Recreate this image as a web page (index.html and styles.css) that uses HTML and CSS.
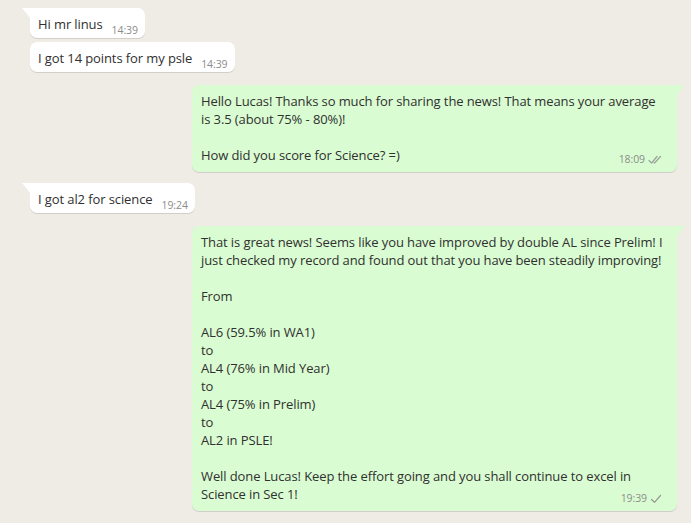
FILE: index.html
```html
<!DOCTYPE html>
<html lang="en">
<head>
<meta charset="utf-8">
<title>Chat</title>
<link rel="stylesheet" href="styles.css">
</head>
<body>
<div class="chat">
  <div class="row in first">
    <div class="bubble in tail">
      <span class="text">Hi mr linus</span>
      <span class="time">14:39</span>
    </div>
  </div>
  <div class="row in grouped">
    <div class="bubble in">
      <span class="text">I got 14 points for my psle</span>
      <span class="time">14:39</span>
    </div>
  </div>

  <div class="row out">
    <div class="bubble out tail">
      <p class="line">Hello Lucas! Thanks so much for sharing the news! That means your average is 3.5 (about 75% - 80%)!</p>
      <p class="line blank">&nbsp;</p>
      <p class="line last">How did you score for Science? =)<span class="time">18:09<svg class="tick" width="14" height="10" viewBox="0 0 14 10"><path d="M1 5.5 L3.6 8 L9 1.5 M6 7.6 L6.5 8 L12.5 1.5" fill="none" stroke="#9aa39a" stroke-width="1.2" stroke-linecap="round" stroke-linejoin="round"/></svg></span></p>
    </div>
  </div>

  <div class="row in">
    <div class="bubble in tail">
      <span class="text">I got al2 for science</span>
      <span class="time">19:24</span>
    </div>
  </div>

  <div class="row out">
    <div class="bubble out tail">
      <p class="line">That is great news! Seems like you have improved by double AL since Prelim! I just checked my record and found out that you have been steadily improving!</p>
      <p class="line blank">&nbsp;</p>
      <p class="line">From</p>
      <p class="line blank">&nbsp;</p>
      <p class="line">AL6 (59.5% in WA1)</p>
      <p class="line">to</p>
      <p class="line">AL4 (76% in Mid Year)</p>
      <p class="line">to</p>
      <p class="line">AL4 (75% in Prelim)</p>
      <p class="line">to</p>
      <p class="line">AL2 in PSLE!</p>
      <p class="line blank">&nbsp;</p>
      <p class="line last">Well done Lucas! Keep the effort going and you shall continue to excel in Science in Sec 1!<span class="time">19:39<svg class="tick" width="12" height="10" viewBox="0 0 12 10"><path d="M1.5 5.5 L4.5 8.3 L10.5 1.5" fill="none" stroke="#8f9a8f" stroke-width="1.2" stroke-linecap="round" stroke-linejoin="round"/></svg></span></p>
    </div>
  </div>
</div>
</body>
</html>
```

FILE: styles.css
```css
html, body {
  margin: 0;
  padding: 0;
  background: #ffffff;
}

body {
  font-family: "Open Sans", "Noto Sans", sans-serif;
  color: #303030;
}

.chat {
  width: 691px;
  height: 523px;
  box-sizing: border-box;
  background: #efebe5;
  padding-top: 8px;
  display: flex;
  flex-direction: column;
  overflow: hidden;
}

.row {
  display: flex;
}

.row.in {
  justify-content: flex-start;
  padding-left: 30px;
  margin-top: 11px;
}

.row.in.first {
  margin-top: 0;
}

.row.in.grouped {
  margin-top: 4px;
}

.row.out {
  justify-content: flex-end;
  padding-right: 14px;
  margin-top: 13px;
}

.bubble {
  position: relative;
  border-radius: 7px;
  box-shadow: 0 1px 0.5px rgba(0, 0, 0, 0.12);
  font-size: 13px;
  line-height: 18px;
  letter-spacing: -0.1px;
}

.bubble.in {
  background: #ffffff;
  padding: 7px 7px 5px 8px;
  display: flex;
  align-items: flex-end;
}

.bubble.in .time {
  margin-left: 9px;
  margin-bottom: -5px;
}

.bubble.out {
  background: #dafcd2;
  width: 485px;
  box-sizing: border-box;
  padding: 7px 9px 8px 9px;
}

.bubble.in.tail {
  border-top-left-radius: 0;
}

.bubble.in.tail::before {
  content: "";
  position: absolute;
  left: -8px;
  top: 0;
  width: 0;
  height: 0;
  border-top: 10px solid #ffffff;
  border-left: 8px solid transparent;
}

.bubble.out.tail {
  border-top-right-radius: 0;
}

.bubble.out.tail::after {
  content: "";
  position: absolute;
  right: -8px;
  top: 0;
  width: 0;
  height: 0;
  border-top: 10px solid #dafcd2;
  border-right: 8px solid transparent;
}

.line {
  margin: 0;
}

.last {
  display: flow-root;
}

.time {
  font-size: 10.5px;
  line-height: 15px;
  letter-spacing: -0.1px;
  color: #8c8c8c;
  white-space: nowrap;
  display: inline-flex;
  align-items: center;
  gap: 3px;
}

.last .time {
  float: right;
  display: flex;
  margin-top: 6px;
  margin-bottom: -4px;
  margin-left: 8px;
  margin-right: 6px;
}

.tick {
  display: block;
}
```
